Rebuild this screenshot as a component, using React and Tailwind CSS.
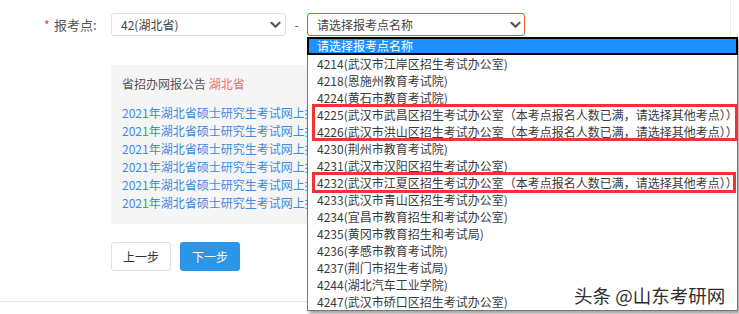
import React from "react";

function Chevron({ className }) {
  return (
    <svg width="11" height="8" viewBox="0 0 11 8" className={className}>
      <path d="M1.5 1.8 L5.5 5.8 L9.5 1.8" fill="none" stroke="#555" strokeWidth="2.2" strokeLinecap="round" strokeLinejoin="round" />
    </svg>
  );
}

const options = [
  "4214(武汉市江岸区招生考试办公室)",
  "4218(恩施州教育考试院)",
  "4224(黄石市教育考试院)",
  "4225(武汉市武昌区招生考试办公室（本考点报名人数已满，请选择其他考点））",
  "4226(武汉市洪山区招生考试办公室（本考点报名人数已满，请选择其他考点））",
  "4230(荆州市教育考试院)",
  "4231(武汉市汉阳区招生考试办公室)",
  "4232(武汉市江夏区招生考试办公室（本考点报名人数已满，请选择其他考点））",
  "4233(武汉市青山区招生考试办公室)",
  "4234(宜昌市教育招生和考试办公室)",
  "4235(黄冈市教育招生和考试局)",
  "4236(孝感市教育考试院)",
  "4237(荆门市招生考试局)",
  "4244(湖北汽车工业学院)",
  "4247(武汉市硚口区招生考试办公室)",
];

export default function App() {
  return (
    <div className="relative w-[739px] h-[314px] overflow-hidden bg-white font-['Microsoft_YaHei','Noto_Sans_CJK_SC',sans-serif] text-[12px] text-[#333]">
      <div className="flex h-full">
        <div className="w-[731px] h-full border-r border-[#ececec]">
          <div className="flex items-center pt-[13px]">
            <div className="w-[111px] pl-[44px] flex items-center text-[13px] text-[#555]">
              <span className="w-[10px] text-[#e8382f] text-[12px]">*</span>
              <span>报考点:</span>
            </div>
            <div className="w-[175px] h-[23px] border border-[#dcdfe6] rounded-[3px] flex items-center justify-between pl-[9px] pr-[4px] text-[#444]">
              <span>42(湖北省)</span>
              <Chevron />
            </div>
            <div className="w-[21px] text-center text-[#555]">-</div>
            <div className="w-[218px] h-[23px] border border-[#e2593a] rounded-[3px] flex items-center justify-between pl-[9px] pr-[3px] text-[#444]">
              <span>请选择报考点名称</span>
              <Chevron />
            </div>
          </div>

          <div className="ml-[111px] mt-[29px] w-[196px] h-[159px] overflow-hidden bg-[#f5f5f5] pl-[11px] pt-[10px] leading-[18px]">
            <div className="text-[#555]">
              省招办网报公告 <span className="text-[#f06e6e]">湖北省</span>
            </div>
            <div className="mt-[11px] text-[#3b8de2]">
              {[0, 1, 2, 3, 4, 5].map((i) => (
                <div key={i} className="whitespace-nowrap">2021年湖北省硕士研究生考试网上报名公告</div>
              ))}
            </div>
          </div>

          <div className="ml-[111px] mt-[18px] flex gap-[9px]">
            <button className="w-[60px] h-[29px] border border-[#dcdfe6] rounded-[3px] bg-white text-[#333] text-[12px]">上一步</button>
            <button className="w-[60px] h-[29px] rounded-[3px] bg-[#2b95e8] text-white text-[12px]">下一步</button>
          </div>

          <div className="mt-[30px] h-px bg-[#e4e4e4]" />
        </div>
      </div>

      {/* open dropdown list */}
      <div className="absolute left-[307px] top-[37px] w-[431px] h-[274px] border border-[#777] bg-white shadow-[2px_3px_3px_rgba(0,0,0,0.35)] leading-[17px] whitespace-nowrap">
        <div className="-mx-px -mt-px h-[18px] border-2 border-black bg-[#1e90ff] text-white pl-[8px] leading-[14px]">请选择报考点名称</div>
        {options.map((o) => (
          <div key={o} className="h-[17px] pl-[9px] text-[#3a3a3a] overflow-hidden">{o}</div>
        ))}
      </div>

      {/* red annotation boxes */}
      <div className="absolute left-[312px] top-[104px] w-[426px] h-[37px] border-[3px] border-[#f03434]" />
      <div className="absolute left-[312px] top-[172px] w-[424px] h-[21px] border-[3px] border-[#f03434]" />

      {/* watermark */}
      <div className="absolute left-[574px] top-[283px] text-[18.5px] leading-[24px] text-[#2e2e2e] [text-shadow:0_0_2px_#fff]">
        头条 @山东考研网
      </div>
    </div>
  );
}
